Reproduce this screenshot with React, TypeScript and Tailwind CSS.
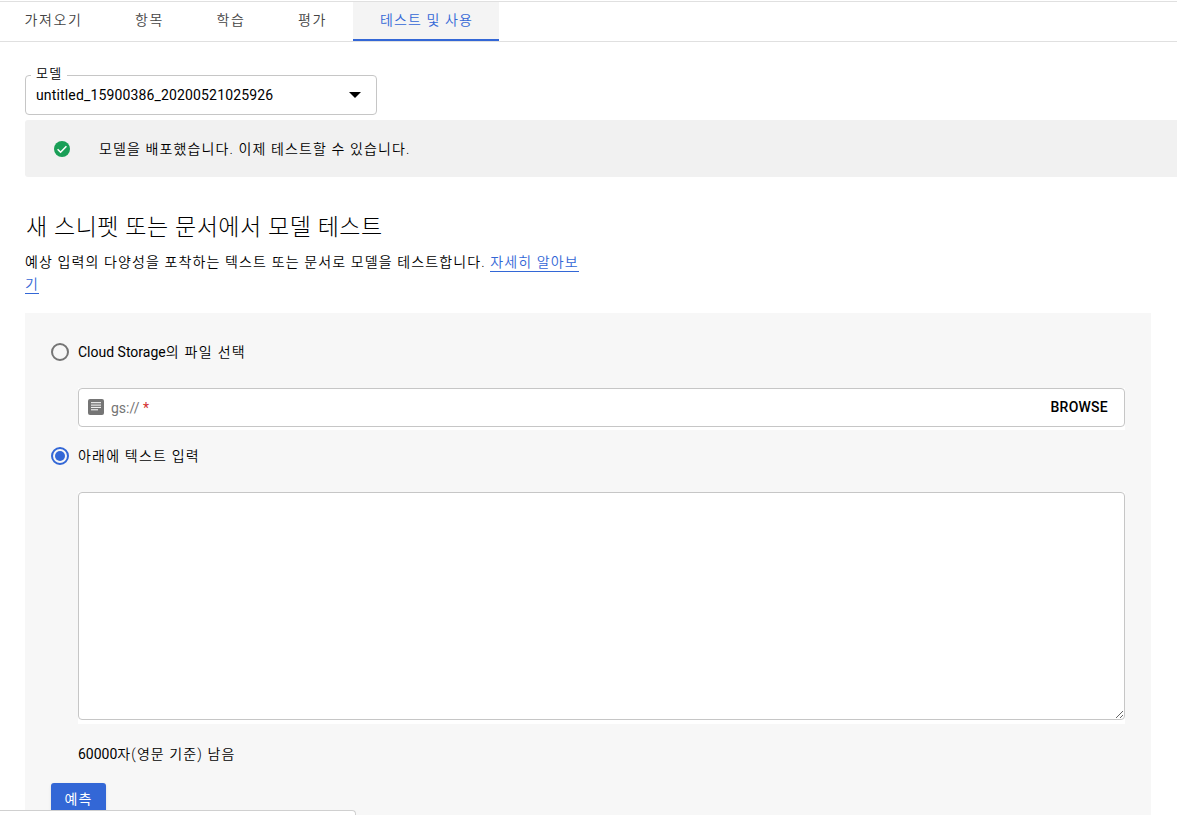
import { useState } from "react"

const tabs = [
  { label: "가져오기", className: "w-[110px] tracking-[1.6px]" },
  { label: "항목", className: "w-[82px] tracking-[1.5px]" },
  { label: "학습", className: "w-[81px] tracking-[1.5px]" },
  { label: "평가", className: "w-[82px] tracking-[1.5px]" },
  { label: "테스트 및 사용", className: "w-[146px] tracking-[1.1px]" }
]

function TabBar() {
  const [active, setActive] = useState(4)

  return (
    <nav className="mt-px flex h-[41px] shrink-0 border-y border-[#e0e0e0] pr-4">
      <div className="-ml-[2px] flex">
        {tabs.map((tab, index) => (
          <button
            key={tab.label}
            type="button"
            onClick={() => setActive(index)}
            className={
              "h-[39px] border-b-2 pl-px text-center text-[14px] font-[350] whitespace-nowrap " +
              tab.className +
              (index === active
                ? " border-[#3367d6] bg-[#f4f4f4] text-[#3367d6]"
                : " border-transparent text-[#444]")
            }>
            {tab.label}
          </button>
        ))}
      </div>
    </nav>
  )
}

function ModelSelect() {
  return (
    <div className="relative mt-[33px] ml-[25px] flex h-10 w-[352px] shrink-0 items-center justify-between rounded-[4px] border border-[#c6c6c6] pr-[15px] pl-[10px]">
      <span className="absolute -top-[11px] left-[5px] bg-white px-[5px] text-[13px] leading-[18px] font-[350] tracking-[1.2px]">
        모델
      </span>
      <span className="text-[14px] tracking-[0.15px]">untitled_15900386_20200521025926</span>
      <svg className="h-[6px] w-3" viewBox="0 0 12 6">
        <path d="M0 0h12L6 6z" />
      </svg>
    </div>
  )
}

function DeployBanner() {
  return (
    <div className="mt-[5px] ml-[25px] flex h-[57px] shrink-0 items-center rounded-l-[3px] bg-[#f1f1f1] pl-[29px]">
      <svg className="h-4 w-4" viewBox="0 0 16 16">
        <circle cx="8" cy="8" r="8" fill="#1a9f57" />
        <path d="M3.6 8.2l3 3 5.8-5.9" fill="none" stroke="#fff" strokeWidth="1.6" />
      </svg>
      <p className="mt-px ml-[29px] text-[14px] font-[350] tracking-[1.12px]">
        모델을 배포했습니다. 이제 테스트할 수 있습니다.
      </p>
    </div>
  )
}

function Radio({ checked, onClick, children }) {
  return (
    <button
      type="button"
      role="radio"
      aria-checked={checked}
      onClick={onClick}
      className="flex h-[22px] items-center">
      <span
        className={
          "flex h-[18px] w-[18px] items-center justify-center rounded-full border-2 " +
          (checked ? "border-[#3367d6]" : "border-[#757575]")
        }>
        {checked ? <span className="h-[10px] w-[10px] rounded-full bg-[#3367d6]" /> : null}
      </span>
      <span className="ml-[9px] text-[14px]">{children}</span>
    </button>
  )
}

function TestPanel() {
  const [source, setSource] = useState("text")

  return (
    <div className="mt-[17px] mr-[26px] ml-[25px] h-[560px] shrink-0 bg-[#f7f7f7] pt-[28px] pr-[26px] pl-[26px]">
      <Radio checked={source === "file"} onClick={() => setSource("file")}>
        Cloud Storage<span className="font-[350] tracking-[1.3px]">의 파일 선택</span>
      </Radio>
      <div className="mt-[25px] ml-[27px] bg-white pb-[3px]">
        <div className="flex h-[39px] items-center rounded-[4px] border border-[#c6c6c6] pr-4 pl-[9px]">
          <svg className="-mt-px h-4 w-4" viewBox="0 0 16 16">
            <rect width="16" height="16" rx="2" fill="#757575" />
            <path d="M3 3.7h10M3 6.1h10M3 8.4h10M3 10.8h7" stroke="#fff" strokeWidth="1" />
          </svg>
          <span className="mt-px ml-[7px] text-[14px] text-[#757575]">
            gs:// <span className="text-[#d32f2f]">*</span>
          </span>
          <button type="button" className="-mt-px ml-auto text-[14px] font-medium tracking-[0.25px]">
            BROWSE
          </button>
        </div>
      </div>
      <div className="mt-[15px]">
        <Radio checked={source === "text"} onClick={() => setSource("text")}>
          <span className="font-[350] tracking-[1.2px]">아래에 텍스트 입력</span>
        </Radio>
      </div>
      <div className="mt-[25px] ml-[27px] bg-white pb-1">
        <textarea className="block h-[228px] w-full resize rounded-[4px] border border-[#c6c6c6] bg-white p-2 text-[14px] outline-none" />
      </div>
      <p className="mt-[20px] ml-[27px] text-[14px] leading-5">
        60000<span className="font-[350] tracking-[1.1px]">자(영문 기준) 남음</span>
      </p>
      <button
        type="button"
        className="mt-[19px] block h-8 w-[55px] rounded-[3px] bg-[#3367d6] text-[14px] tracking-[1px] text-white shadow">
        예측
      </button>
    </div>
  )
}

export default function App() {
  return (
    <div className="relative flex h-[815px] flex-col overflow-hidden bg-white font-[Roboto,'Noto_Sans_CJK_KR',sans-serif] text-black">
      <TabBar />
      <ModelSelect />
      <DeployBanner />
      <h1 className="mt-[34px] ml-[26px] text-[23px] leading-[34px] font-light tracking-[0.57px]">
        새 스니펫 또는 문서에서 모델 테스트
      </h1>
      <p className="mt-[6px] mb-px ml-[25px] text-[14px] leading-[22px] font-[350] tracking-[1.12px]">
        예상 입력의 다양성을 포착하는 텍스트 또는 문서로 모델을 테스트합니다.{" "}
        <a href="#" className="border-b border-[#3367d6] pb-px text-[#3367d6]">
          자세히 알아보
          <br />기
        </a>
      </p>
      <TestPanel />
      {/* status bar of the window, floats over the page */}
      <div className="absolute bottom-0 left-0 h-[5px] w-[356px] rounded-tr-[4px] border-t border-r border-[#d0d0d0] bg-white" />
    </div>
  )
}
